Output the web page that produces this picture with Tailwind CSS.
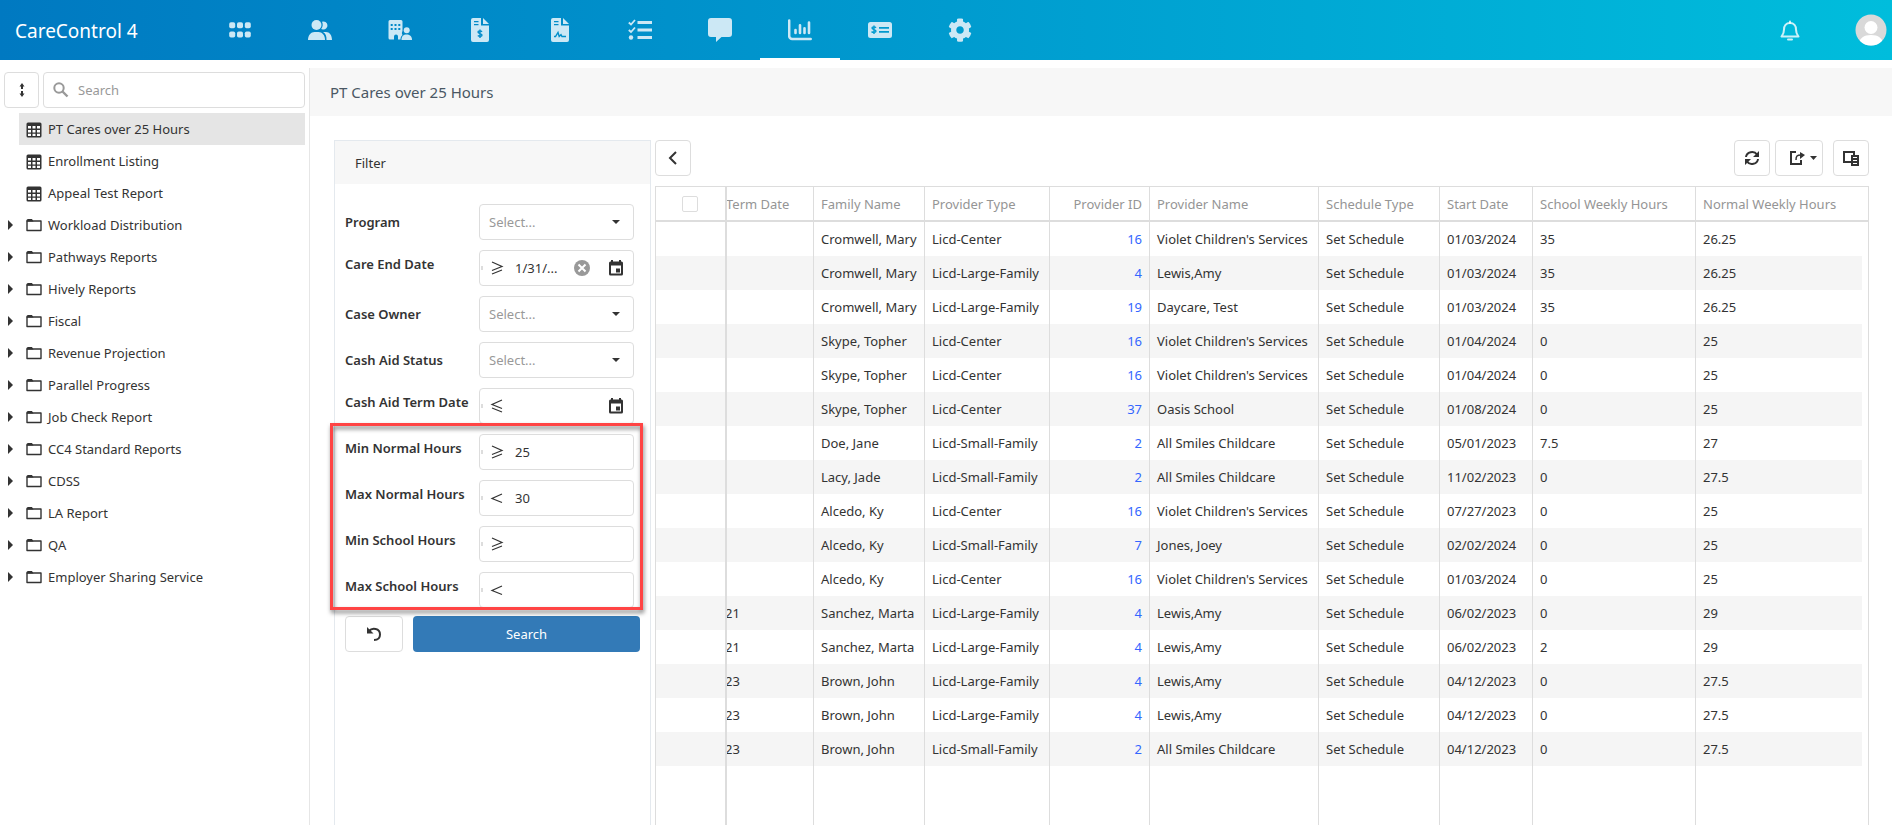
<!DOCTYPE html>
<html lang="en">
<head>
  <meta charset="UTF-8">
  <meta name="viewport" content="width=device-width, initial-scale=1.0">
  <title>CareControl 4</title>
  <script src="https://cdn.jsdelivr.net/npm/@tailwindcss/browser@4"></script>
</head>
<body class="flex h-screen flex-col overflow-hidden bg-white font-['Noto_Sans','Open_Sans',sans-serif] text-[13px] text-[#333]">

  <header class="flex h-[60px] shrink-0 items-center bg-linear-to-r from-[#0079c1] to-[#00bddc]">
    <a href="#" class="w-[200px] pt-[2px] pl-[15px] text-[19px] text-white">CareControl 4</a>
    <nav id="nav" class="flex h-full flex-1"></nav>
    <button aria-label="Notifications" class="mr-[53px] pt-[2px] text-white/80">
      <svg class="h-6 w-6" viewBox="0 0 24 24" fill="none" stroke="currentColor" stroke-width="2" stroke-linejoin="round" stroke-linecap="round"><path d="M12 4c-4 0-6 3-6 6.500 0 4-1 5-2.500 7h17c-1.500-2-2.500-3-2.500-7C18 7 16 4 12 4z"/><path d="M12 2.500V4M10 20.500h4"/></svg>
    </button>
    <button aria-label="Account" class="mr-[5px]">
      <svg class="h-8 w-8" viewBox="0 0 32 32"><defs><clipPath id="av"><circle cx="16" cy="16" r="15.500"/></clipPath></defs><g clip-path="url(#av)"><path fill="#d9d9d9" d="M0 0h32v32H0z"/><circle cx="16" cy="13.500" r="6.500" fill="#fff"/><path fill="#fff" d="M3 32c1-8 6-11 13-11s12 3 13 11z"/></g></svg>
    </button>
  </header>

  <div class="flex min-h-0 flex-1 pt-2">
    <aside class="w-[309px] shrink-0">
      <div class="flex gap-1 pt-1 pl-1">
        <button aria-label="Expand all" class="flex h-9 w-[35px] items-center justify-center rounded border border-[#ddd]">
          <svg class="h-4 w-4" viewBox="0 0 16 16" fill="#333"><path d="M8 1l2.500 3.500H9v2.500H7V4.500H5.500zM8 15l2.500-3.500H9V9H7v2.500H5.500z"/></svg>
        </button>
        <div class="flex h-9 w-[262px] items-center rounded border border-[#ddd] pl-[9px]">
          <svg class="h-4 w-4 shrink-0" viewBox="0 0 16 16" fill="none" stroke="#999" stroke-width="2"><circle cx="6" cy="6" r="4.700"/><path d="M9.500 9.500l5 5" stroke-width="2.400"/></svg>
          <input type="text" aria-label="Search reports" placeholder="Search" class="min-w-0 flex-1 pt-px pl-[9px] outline-none placeholder:text-[#999]">
        </div>
      </div>
      <ul id="tree" class="pt-[5px] pr-1"></ul>
    </aside>

    <main class="flex min-w-0 flex-1 flex-col border-l border-[#e6e6e6]">
      <h1 class="flex h-12 shrink-0 items-center bg-[#f7f7f7] pt-px pl-5 text-[15px] text-[#4a5764]">PT Cares over 25 Hours</h1>

      <div class="flex min-h-0 flex-1 gap-1 pt-6 pr-[23px] pl-6">
        <form class="w-[317px] shrink-0 border border-b-0 border-[#e4e9ee]" onsubmit="return false">
          <h2 class="flex h-[43px] items-center bg-[#f7f7f7] pt-[2px] pl-5">Filter</h2>
          <div class="px-[10px] pt-5">
            <div id="filters" class="flex flex-col gap-[10px]"></div>
            <div class="relative pt-[10px]">
              <div id="hours" class="flex flex-col gap-[10px]"></div>
              <div class="pointer-events-none absolute -top-px -right-[3px] -bottom-[2px] -left-[15px] border-3 border-[#ff4444] drop-shadow-[1px_3px_2px_rgba(0,0,0,0.5)]"></div>
            </div>
            <div class="flex gap-[10px] pt-2">
              <button type="reset" aria-label="Reset" class="flex h-9 w-[58px] items-center justify-center rounded border border-[#ddd]">
                <svg class="h-4 w-4" viewBox="0 0 16 16" fill="none" stroke="#333" stroke-width="2"><path d="M3 5c3-3.500 11-3 11 3.500 0 4-3 5.500-6 5.500"/><path d="M1 1v6.500h6.500z" fill="#333" stroke="none"/></svg>
              </button>
              <button type="submit" class="h-9 flex-1 rounded bg-[#337ab7] pt-px text-white">Search</button>
            </div>
          </div>
        </form>

        <section class="flex min-w-0 flex-1 flex-col">
          <div class="flex">
            <button aria-label="Hide filter" class="mr-auto flex h-9 w-9 items-center justify-center rounded border border-[#ddd]">
              <svg class="h-4 w-4" viewBox="0 0 16 16" fill="none" stroke="#333" stroke-width="2"><path d="M11 2L5 8l6 6"/></svg>
            </button>
            <button aria-label="Refresh" class="mr-[5px] flex h-9 w-9 items-center justify-center rounded border border-[#ddd]">
              <svg class="h-4 w-4" viewBox="0 0 16 16" fill="none" stroke="#333" stroke-width="2"><path d="M2 7c.5-5 8-7 11-2.500M14 9c-.5 5-8 7-11 2.500"/><path d="M15 1v6H9zM1 15V9h6z" fill="#333" stroke="none"/></svg>
            </button>
            <button aria-label="Export" class="mr-[10px] flex h-9 w-12 items-center justify-end gap-[5px] rounded border border-[#ddd] pr-[5px]">
              <svg class="h-4 w-4" viewBox="0 0 16 16" fill="none" stroke="#333" stroke-width="2"><path d="M7 2H2v12h10v-4"/><path d="M7 10c0-4 1-5 5-5" stroke-width="1.500"/><path d="M11 2l5 3-5 4z" fill="#333" stroke="none"/></svg>
              <svg class="h-1 w-[7px]" viewBox="0 0 7 4" fill="#333"><path d="M0 0h7L3.500 4z"/></svg>
            </button>
            <button aria-label="Column chooser" class="flex h-9 w-9 items-center justify-center rounded border border-[#ddd]">
              <svg class="h-4 w-4" viewBox="0 0 16 16"><path fill="none" stroke="#333" stroke-width="2" d="M8 12H1V2h10v3"/><path fill="#333" d="M8 5h8v11H8z"/><path stroke="#fff" d="M10 7.500h4M10 10.500h4M10 13.500h4"/></svg>
            </button>
          </div>

          <div class="mt-[10px] min-h-0 flex-1 overflow-hidden border border-b-0 border-[#ddd]">
            <table class="h-full w-full table-fixed border-separate border-spacing-0 text-left">
              <colgroup>
                <col class="w-[71px]"><col class="w-[87px]"><col class="w-[111px]"><col class="w-[125px]"><col class="w-[100px]"><col class="w-[169px]"><col class="w-[121px]"><col class="w-[93px]"><col class="w-[163px]"><col><col class="w-[6px]">
              </colgroup>
              <thead>
                <tr class="h-[35px] whitespace-nowrap text-[#959595]">
                  <th class="border-r-2 border-b-2 border-[#ddd] p-0 pl-[26px] align-middle"><input type="checkbox" aria-label="Select all" class="block h-4 w-4 appearance-none rounded-xs border border-[#ddd]"></th>
                  <th class="overflow-hidden border-r border-b-2 border-[#ddd] p-0 pt-[2px] -indent-px font-normal">Term Date</th>
                  <th class="border-r border-b-2 border-[#ddd] px-[7px] pt-[2px] pb-0 font-normal">Family Name</th>
                  <th class="border-r border-b-2 border-[#ddd] px-[7px] pt-[2px] pb-0 font-normal">Provider Type</th>
                  <th class="border-r border-b-2 border-[#ddd] px-[7px] pt-[2px] pb-0 text-right font-normal">Provider ID</th>
                  <th class="border-r border-b-2 border-[#ddd] px-[7px] pt-[2px] pb-0 font-normal">Provider Name</th>
                  <th class="border-r border-b-2 border-[#ddd] px-[7px] pt-[2px] pb-0 font-normal">Schedule Type</th>
                  <th class="border-r border-b-2 border-[#ddd] px-[7px] pt-[2px] pb-0 font-normal">Start Date</th>
                  <th class="border-r border-b-2 border-[#ddd] px-[7px] pt-[2px] pb-0 font-normal">School Weekly Hours</th>
                  <th class="border-b-2 border-[#ddd] px-[7px] pt-[2px] pb-0 font-normal">Normal Weekly Hours</th>
                  <th class="border-b-2 border-[#ddd] p-0"></th>
                </tr>
              </thead>
              <tbody id="rows"></tbody>
            </table>
          </div>
        </section>
      </div>
    </main>
  </div>

  <script>
    const navIcons = [
      ['Dashboard', '<rect x="1.200" y="4.200" width="6" height="6" rx="1.800"/><rect x="9" y="4.200" width="6" height="6" rx="1.800"/><rect x="16.800" y="4.200" width="6" height="6" rx="1.800"/><rect x="1.200" y="13.500" width="6" height="6" rx="1.800"/><rect x="9" y="13.500" width="6" height="6" rx="1.800"/><rect x="16.800" y="13.500" width="6" height="6" rx="1.800"/>'],
      ['Families', '<circle cx="8.500" cy="7" r="5"/><path d="M0 22c0-5 3-8 6.500-8h4c3.500 0 6.500 3 6.500 8z"/><path d="M14 3.800a4 4 0 1 1 1 7.700c-.8 0-1.300-.2-1.800-.5 1.700-2 2-5 .8-7.200zM15 14h3c3.500 0 6 3 6 8h-5.500c.2-4-1-6.500-3.500-8z"/>'],
      ['Providers', '<path fill-rule="evenodd" d="M2 2h11a1.500 1.500 0 0 1 1.500 1.500V13c-1 2-.5 3 0 4-1.500 1-2 3-2 4.500h-2.500v-3a2 2 0 0 0-4 0v3H2A1.500 1.500 0 0 1 .5 20V3.500A1.500 1.500 0 0 1 2 2zm.7 4v2h2V6zm3.800 0v2h2V6zm3.800 0v2h2V6zM2.700 10v2h2v-2zm3.800 0v2h2v-2zm3.800 0v2h2v-2z"/><circle cx="18.700" cy="12.300" r="3"/><path d="M13.500 22c0-4 2-5.500 5-5.500s5.500 1.500 5.500 5.500z"/>'],
      ['Invoices', '<path fill-rule="evenodd" d="M5 0h8v7.500h8V22a2 2 0 0 1-2 2H5a2 2 0 0 1-2-2V2a2 2 0 0 1 2-2zm1 3v1.300h4.500V3zm0 3v1.300h4.500V6z"/><path d="M15 0l6 6h-6z"/><path d="M14 13.800c-1-1.300-4-1.300-4 .3s4 1.300 4 3-3 1.600-4.200.5M12 11.500v8.500" fill="none" stroke="#008bca" stroke-width="1.400"/>'],
      ['Contracts', '<path fill-rule="evenodd" d="M5 0h8v7.500h8V22a2 2 0 0 1-2 2H5a2 2 0 0 1-2-2V2a2 2 0 0 1 2-2zm1 3v1.300h4.500V3zm0 3v1.300h4.500V6z"/><path d="M15 0l6 6h-6z"/><path d="M6 18.500h1.500L10 14.500l1.200 4 1.800-1.800 1 1.800h4" fill="none" stroke="#008fcb" stroke-width="1.400"/>'],
      ['Tasks', '<path d="M9.500 3H24v3H9.500zM9.500 10.500H24v3H9.500zM9.500 18H24v3H9.500z"/><circle cx="3" cy="19.500" r="2.200"/><path d="M.8 4.500L3 6.500l4-4.500M.8 12L3 14l4-4.500" fill="none" stroke="currentColor" stroke-width="1.800"/>'],
      ['Messages', '<path d="M3 0h18a3 3 0 0 1 3 3v13a3 3 0 0 1-3 3h-7.500L8 24v-5H3a3 3 0 0 1-3-3V3a3 3 0 0 1 3-3z"/>'],
      ['Reports', '<path d="M1.200 2.500V18a3 3 0 0 0 3 3h18.500" fill="none" stroke="currentColor" stroke-width="2.500" stroke-linecap="round"/><path d="M7.500 12v3M12 7.300V15M16.500 10.300V15M21 4.500V15" fill="none" stroke="currentColor" stroke-width="2.600" stroke-linecap="round"/>'],
      ['Payments', '<path fill-rule="evenodd" d="M2.500 4h19A2.500 2.500 0 0 1 24 6.500v11a2.500 2.500 0 0 1-2.500 2.500h-19A2.500 2.500 0 0 1 0 17.500v-11A2.500 2.500 0 0 1 2.500 4zM11 9v1.700h10V9zm0 4v1.700h10V13z"/><path d="M8 9.800c-1-1.300-4-1.300-4 .3s4 1.300 4 3-3.200 1.600-4.500.5M6 7.500V16" fill="none" stroke="#009acf" stroke-width="1.400"/>'],
      ['Settings', '<path transform="scale(.047)" d="M487.400 315.700l-42.600-24.600c4.300-23.200 4.300-47 0-70.200l42.600-24.600c4.900-2.800 7.100-8.600 5.500-14-11.100-35.600-30-67.800-54.700-94.600-3.800-4.100-10-5.100-14.800-2.300L380.800 110c-17.900-15.400-38.500-27.300-60.800-35.100V25.800c0-5.600-3.900-10.500-9.400-11.700-36.700-8.200-74.300-7.800-109.200 0-5.500 1.200-9.400 6.100-9.400 11.700V75c-22.200 7.900-42.800 19.800-60.800 35.100L88.700 85.500c-4.900-2.800-11-1.900-14.800 2.300-24.700 26.700-43.600 58.900-54.700 94.600-1.700 5.400.6 11.200 5.500 14L67.300 221c-4.300 23.200-4.300 47 0 70.200l-42.600 24.600c-4.900 2.800-7.100 8.600-5.500 14 11.100 35.600 30 67.800 54.700 94.600 3.800 4.100 10 5.100 14.800 2.300l42.600-24.600c17.900 15.400 38.500 27.300 60.800 35.100v49.200c0 5.600 3.900 10.500 9.400 11.700 36.700 8.200 74.300 7.800 109.200 0 5.500-1.200 9.400-6.100 9.400-11.700v-49.200c22.200-7.900 42.800-19.800 60.800-35.100l42.600 24.600c4.900 2.800 11 1.900 14.800-2.300 24.700-26.700 43.600-58.900 54.700-94.600 1.500-5.500-.7-11.300-5.600-14.100zM256 336c-44.100 0-80-35.900-80-80s35.900-80 80-80 80 35.900 80 80-35.900 80-80 80z"/>']
    ];
    document.getElementById('nav').innerHTML = navIcons.map(([name, shape]) => `
      <a href="#" aria-label="${name}" class="flex w-20 items-center justify-center border-b-2 pt-[2px] text-[#cce8f5] ${name === 'Reports' ? 'border-white' : 'border-transparent'}">
        <svg class="h-6 w-6" viewBox="0 0 24 24" fill="currentColor">${shape}</svg>
      </a>`).join('');

    // Sidebar tree: reports first, then folders
    const reports = ['PT Cares over 25 Hours', 'Enrollment Listing', 'Appeal Test Report'];
    const folders = ['Workload Distribution', 'Pathways Reports', 'Hively Reports', 'Fiscal', 'Revenue Projection', 'Parallel Progress', 'Job Check Report', 'CC4 Standard Reports', 'CDSS', 'LA Report', 'QA', 'Employer Sharing Service'];
    const tableIcon = '<svg class="h-4 w-4" viewBox="0 0 16 16"><rect x=".5" y=".5" width="15" height="15" rx="1.500" fill="#333"/><path fill="#fff" d="M2 4h3v2.500H2zM6.500 4h3v2.500h-3zM11 4h3v2.500h-3zM2 8h3v2.500H2zM6.500 8h3v2.500h-3zM11 8h3v2.500h-3zM2 11.700h3v2.300H2zM6.500 11.700h3v2.300h-3zM11 11.700h3v2.300h-3z"/></svg>';
    const folderIcon = '<svg class="h-4 w-4" viewBox="0 0 16 16"><path fill="none" stroke="#333" stroke-width="1.400" stroke-linejoin="round" d="M1 12.500V3h14v9.500z"/><path fill="#333" d="M.5 3.500v-1A1.500 1.500 0 0 1 2 1h4l1.500 2.500z"/></svg>';
    document.getElementById('tree').innerHTML =
      reports.map((r, i) => `
        <li class="pl-[19px]"><a href="#" class="flex h-8 items-center gap-[6px] pt-[2px] pl-[7px] ${i === 0 ? 'bg-[#e5e5e5]' : ''}">${tableIcon}${r}</a></li>`).join('') +
      folders.map(f => `
        <li><a href="#" class="flex h-8 items-center gap-[6px] pt-[2px] pl-2"><svg class="mr-[7px] mb-[2px] h-[10px] w-[5px]" viewBox="0 0 5 10" fill="#333"><path d="M0 0l5 5-5 5z"/></svg>${folderIcon}${f}</a></li>`).join('');

    // Filter fields
    const ops = {
      ge: '<path d="M3 2l10 4.500-10 4M13 10L3 14"/>',
      le: '<path d="M13 2L3 6.500l10 4M3 10l10 4"/>',
      lt: '<path d="M13 4L3 8.500l10 4"/>'
    };
    const calendar = '<button type="button" aria-label="Open calendar"><svg class="h-4 w-4" viewBox="0 0 16 16"><path fill="#333" fill-rule="evenodd" d="M3 0h2v1.500h6V0h2v1.500h.5A1.500 1.500 0 0 1 15 3v11a1.500 1.500 0 0 1-1.500 1.500h-11A1.500 1.500 0 0 1 1 14V3a1.500 1.500 0 0 1 1.500-1.500H3zM3 5.500v8h10v-8z"/><path fill="#333" d="M8 8.500h4v4H8z"/></svg></button>';
    const clear = '<button type="button" aria-label="Clear"><svg class="h-4 w-4" viewBox="0 0 16 16"><circle cx="8" cy="8" r="8" fill="#999"/><path d="M4.500 4.500l7 7M11.500 4.500l-7 7" stroke="#fff" stroke-width="2"/></svg></button>';
    const selectField = (id, label) => `
      <div class="flex pr-[6px]">
        <label for="${id}" class="flex h-9 w-[134px] items-center pt-px font-semibold">${label}</label>
        <div class="relative flex-1">
          <select id="${id}" class="h-9 w-full appearance-none rounded border border-[#ddd] px-[9px] pt-px text-[#999]"><option>Select...</option></select>
          <svg class="pointer-events-none absolute top-4 right-[14px] h-1 w-2" viewBox="0 0 8 4" fill="#333"><path d="M0 0h8L4 4z"/></svg>
        </div>
      </div>`;
    const opField = (id, label, op, value, extra) => `
      <div class="flex pr-[6px]">
        <label for="${id}" class="flex h-9 w-[134px] items-center pb-[6px] font-semibold whitespace-nowrap">${label}</label>
        <div class="flex h-9 min-w-0 flex-1 items-center rounded border border-[#ddd] pr-[9px] pl-px">
          <span class="h-1 w-[2px] bg-[#ddd]"></span>
          <button type="button" aria-label="Operator" class="ml-[6px]"><svg class="h-4 w-4" viewBox="0 0 16 16" fill="none" stroke="#333" stroke-width="1.200">${ops[op]}</svg></button>
          <input id="${id}" type="text" value="${value}" class="min-w-0 flex-1 pt-px pl-[10px] outline-none">
          <span class="flex gap-[18px]">${extra}</span>
        </div>
      </div>`;
    document.getElementById('filters').innerHTML =
      selectField('program', 'Program') +
      opField('careEnd', 'Care End Date', 'ge', '1/31/...', clear + calendar) +
      selectField('owner', 'Case Owner') +
      selectField('cashAid', 'Cash Aid Status') +
      opField('cashTerm', 'Cash Aid Term Date', 'le', '', calendar);
    document.getElementById('hours').innerHTML =
      opField('minNormal', 'Min Normal Hours', 'ge', '25', '') +
      opField('maxNormal', 'Max Normal Hours', 'lt', '30', '') +
      opField('minSchool', 'Min School Hours', 'ge', '', '') +
      opField('maxSchool', 'Max School Hours', 'lt', '', '');

    // Grid: term, family, type, id, provider, start, school, normal
    const data = [
      ['', 'Cromwell, Mary', 'Licd-Center', 16, "Violet Children's Services", '01/03/2024', '35', '26.25'],
      ['', 'Cromwell, Mary', 'Licd-Large-Family', 4, 'Lewis,Amy', '01/03/2024', '35', '26.25'],
      ['', 'Cromwell, Mary', 'Licd-Large-Family', 19, 'Daycare, Test', '01/03/2024', '35', '26.25'],
      ['', 'Skype, Topher', 'Licd-Center', 16, "Violet Children's Services", '01/04/2024', '0', '25'],
      ['', 'Skype, Topher', 'Licd-Center', 16, "Violet Children's Services", '01/04/2024', '0', '25'],
      ['', 'Skype, Topher', 'Licd-Center', 37, 'Oasis School', '01/08/2024', '0', '25'],
      ['', 'Doe, Jane', 'Licd-Small-Family', 2, 'All Smiles Childcare', '05/01/2023', '7.5', '27'],
      ['', 'Lacy, Jade', 'Licd-Small-Family', 2, 'All Smiles Childcare', '11/02/2023', '0', '27.5'],
      ['', 'Alcedo, Ky', 'Licd-Center', 16, "Violet Children's Services", '07/27/2023', '0', '25'],
      ['', 'Alcedo, Ky', 'Licd-Small-Family', 7, 'Jones, Joey', '02/02/2024', '0', '25'],
      ['', 'Alcedo, Ky', 'Licd-Center', 16, "Violet Children's Services", '01/03/2024', '0', '25'],
      ['21', 'Sanchez, Marta', 'Licd-Large-Family', 4, 'Lewis,Amy', '06/02/2023', '0', '29'],
      ['21', 'Sanchez, Marta', 'Licd-Large-Family', 4, 'Lewis,Amy', '06/02/2023', '2', '29'],
      ['23', 'Brown, John', 'Licd-Large-Family', 4, 'Lewis,Amy', '04/12/2023', '0', '27.5'],
      ['23', 'Brown, John', 'Licd-Large-Family', 4, 'Lewis,Amy', '04/12/2023', '0', '27.5'],
      ['23', 'Brown, John', 'Licd-Small-Family', 2, 'All Smiles Childcare', '04/12/2023', '0', '27.5']
    ];
    const cell = v => `<td class="border-r border-[#ddd] px-[7px] pt-[2px] pb-0">${v}</td>`;
    document.getElementById('rows').innerHTML = data.map((d, i) => {
      const [term, family, type, id, provider, start, school, normal] = d;
      return `<tr class="h-[34px] whitespace-nowrap ${i % 2 ? '*:not-last:bg-[#f5f5f5]' : ''}">
        <td class="border-r-2 border-[#ddd] p-0"></td>
        <td class="overflow-hidden border-r border-[#ddd] p-0 pt-[2px] -indent-[2px]">${term}</td>
        ${cell(family)}${cell(type)}
        <td class="border-r border-[#ddd] px-[7px] pt-[2px] pb-0 text-right"><a href="#" class="text-[#3366ff]">${id}</a></td>
        ${cell(provider)}${cell('Set Schedule')}${cell(start)}${cell(school)}
        <td class="px-[7px] pt-[2px] pb-0">${normal}</td><td class="p-0"></td>
      </tr>`;
    }).join('') + `<tr class="h-full"><td class="border-r-2 border-[#ddd] p-0"></td>${'<td class="border-r border-[#ddd] p-0"></td>'.repeat(8)}<td class="p-0"></td><td class="p-0"></td></tr>`;
  </script>
</body>
</html>
